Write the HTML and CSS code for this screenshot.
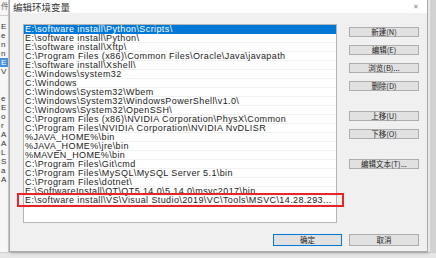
FILE: index.html
```html
<!DOCTYPE html>
<html lang="zh-CN">
<head>
    <meta charset="UTF-8">
    <title>编辑环境变量</title>
    <link rel="stylesheet" href="styles.css">
</head>
<body>
    <div class="screen">
        <!-- Window behind the dialog, mostly hidden -->
        <div class="behind">
            <span class="behind-top">件</span>
            <span>E</span>
            <span>e</span>
            <span>n</span>
            <span>n</span>
            <span class="hl">E</span>
            <span>V</span>
            <span class="sp"></span>
            <span>e</span>
            <span>E</span>
            <span>o</span>
            <span>r</span>
            <span>A</span>
            <span>A</span>
            <span>L</span>
            <span>S</span>
            <span>a</span>
            <span>A</span>
        </div>

        <!-- Dialog -->
        <div class="dialog">
            <div class="titlebar">
                <span class="title">编辑环境变量</span>
                <span class="close">✕</span>
            </div>

            <div class="dialog-body">
                <div class="main-row">
                    <div class="list-wrap">
                        <ul class="path-list">
                            <li class="selected">E:\software install\Python\Scripts\</li>
                            <li>E:\software install\Python\</li>
                            <li>E:\software install\Xftp\</li>
                            <li>C:\Program Files (x86)\Common Files\Oracle\Java\javapath</li>
                            <li>E:\software install\Xshell\</li>
                            <li>C:\Windows\system32</li>
                            <li>C:\Windows</li>
                            <li>C:\Windows\System32\Wbem</li>
                            <li>C:\Windows\System32\WindowsPowerShell\v1.0\</li>
                            <li>C:\Windows\System32\OpenSSH\</li>
                            <li>C:\Program Files (x86)\NVIDIA Corporation\PhysX\Common</li>
                            <li>C:\Program Files\NVIDIA Corporation\NVIDIA NvDLISR</li>
                            <li>%JAVA_HOME%\bin</li>
                            <li>%JAVA_HOME%\jre\bin</li>
                            <li>%MAVEN_HOME%\bin</li>
                            <li>C:\Program Files\Git\cmd</li>
                            <li>C:\Program Files\MySQL\MySQL Server 5.1\bin</li>
                            <li>C:\Program Files\dotnet\</li>
                            <li>E:\SoftwareInstall\QT\QT5.14.0\5.14.0\msvc2017\bin</li>
                            <li>E:\software install\VS\Visual Studio\2019\VC\Tools\MSVC\14.28.293...</li>
                        </ul>
                        <!-- red annotation box -->
                        <div class="mark"></div>
                    </div>

                    <div class="side-buttons">
                        <button class="btn">新建(N)</button>
                        <button class="btn">编辑(E)</button>
                        <button class="btn">浏览(B)...</button>
                        <button class="btn">删除(D)</button>
                        <button class="btn push">上移(U)</button>
                        <button class="btn">下移(O)</button>
                        <button class="btn push">编辑文本(T)...</button>
                    </div>
                </div>

                <div class="footer-row">
                    <button class="btn btn-default">确定</button>
                    <button class="btn">取消</button>
                </div>
            </div>
        </div>

        <div class="right-strip"></div>
    </div>
    <div class="bottom-strip"></div>
</body>
</html>
```

FILE: styles.css
```css
* {
    margin: 0;
    padding: 0;
    box-sizing: border-box;
}

body {
    width: 436px;
    height: 258px;
    overflow: hidden;
    background: #e4e4e4;
    font-family: 'Liberation Sans', 'Noto Sans CJK SC', sans-serif;
    color: #1a1a1a;
}

.screen {
    display: flex;
    height: 252px;
}

/* window behind */
.behind {
    width: 9px;
    display: flex;
    flex-direction: column;
    background: #f7f7f7;
    border-right: 1px solid #cfcfcf;
    font-size: 8px;
    line-height: 9px;
    color: #333;
    overflow: hidden;
    padding-top: 2px;
}

.behind span {
    display: block;
    padding-left: 1px;
    white-space: nowrap;
}

.behind .behind-top {
    height: 14px;
    border-bottom: 1px solid #cfcfcf;
    margin-bottom: 6px;
    color: #666;
}

.behind .hl {
    color: #fff;
    background: #4a90d9;
}

.behind .sp {
    height: 18px;
}

/* dialog */
.dialog {
    width: 419px;
    display: flex;
    flex-direction: column;
    background: #f0f0f0;
    border: 1px solid #a8a8a8;
    border-top: none;
    box-shadow: 1px 1px 3px rgba(0, 0, 0, 0.25);
}

.titlebar {
    height: 13px;
    background: #fff;
    display: flex;
    align-items: center;
    justify-content: space-between;
    padding: 0 8px 0 3px;
}

.title {
    font-family: 'Noto Sans CJK SC', sans-serif;
    font-size: 9.5px;
    color: #333;
}

.close {
    font-size: 7px;
    color: #888;
}

.dialog-body {
    flex: 1;
    display: flex;
    flex-direction: column;
    padding: 11px 8px 6px 13px;
}

.main-row {
    display: flex;
    gap: 12px;
}

.list-wrap {
    position: relative;
    width: 314px;
    height: 199px;
}

.path-list {
    list-style: none;
    height: 100%;
    background: #fff;
    border: 1px solid #b4b4b4;
    overflow: hidden;
}

.path-list li {
    height: 9px;
    line-height: 8px;
    font-size: 9px;
    letter-spacing: 0.4px;
    padding-left: 1px;
    white-space: nowrap;
    border-bottom: 1px solid #f1f1f1;
}

.path-list li.selected {
    background: #0078d7;
    color: #fff;
    border-bottom-color: #0078d7;
}

.mark {
    position: absolute;
    left: -6px;
    top: 169px;
    width: 327px;
    height: 14px;
    border: 2px solid #e8262a;
}

.side-buttons {
    display: flex;
    flex-direction: column;
    gap: 8px;
    padding-top: 3px;
}

.btn {
    width: 70px;
    height: 10px;
    background: #e1e1e1;
    border: 1px solid #adadad;
    font-family: 'Noto Sans CJK SC', sans-serif;
    font-size: 7.5px;
    line-height: 8px;
    color: #222;
}

.side-buttons .push {
    margin-top: 12px;
}

.footer-row {
    display: flex;
    justify-content: flex-end;
    gap: 7px;
    margin-top: 11px;
}

.footer-row .btn {
    height: 12px;
    width: 69px;
}

.footer-row .btn:last-child {
    width: 70px;
}

.btn-default {
    border-color: #0078d7;
}

.right-strip {
    flex: 1;
    background: #d2d2d2;
    border-left: 2px solid #e9e9e9;
}

.bottom-strip {
    height: 6px;
    background: #e6e6e6;
    border-top: 1px solid #d0d0d0;
}
```
